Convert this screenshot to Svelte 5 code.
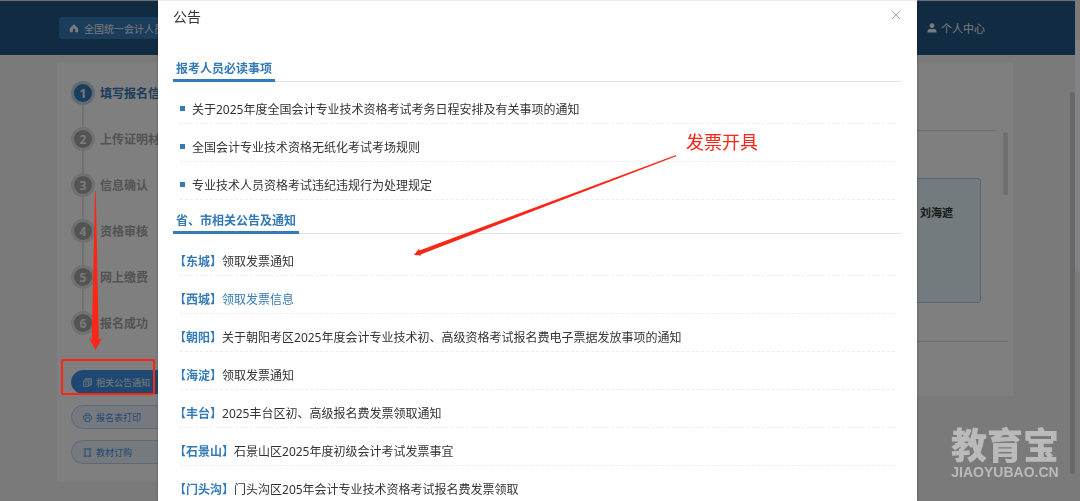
<script>
  const steps = ['填写报名信息', '上传证明材料', '信息确认', '资格审核', '网上缴费', '报名成功'];
  const required = [
    '关于2025年度全国会计专业技术资格考试考务日程安排及有关事项的通知',
    '全国会计专业技术资格无纸化考试考场规则',
    '专业技术人员资格考试违纪违规行为处理规定'
  ];
  const local = [
    { area: '东城', title: '领取发票通知' },
    { area: '西城', title: '领取发票信息', active: true },
    { area: '朝阳', title: '关于朝阳考区2025年度会计专业技术初、高级资格考试报名费电子票据发放事项的通知' },
    { area: '海淀', title: '领取发票通知' },
    { area: '丰台', title: '2025丰台区初、高级报名费发票领取通知' },
    { area: '石景山', title: '石景山区2025年度初级会计考试发票事宜' },
    { area: '门头沟', title: '门头沟区205年会计专业技术资格考试报名费发票领取' }
  ];
</script>

<div class="page">
  <header class="topbar">
    <a class="home" href="#home">
      <svg width="10" height="10" viewBox="0 0 10 10"><path d="M5 1.200 9.200 5.200v4H6.200V7a1.200 1.200 0 0 0-2.400 0v2.200H.8v-4z" fill="currentColor" /></svg>
      全国统一会计人员管理
    </a>
    <a class="user" href="#user">
      <svg width="10" height="10" viewBox="0 0 10 10"><circle cx="5" cy="2.7" r="2.4" fill="currentColor" /><path d="M.6 9.6V8.2C.6 6.8 1.6 6 2.8 6h4.4c1.2 0 2.2.8 2.2 2.2v1.4z" fill="currentColor" /></svg>
      个人中心
    </a>
  </header>

  <main class="content">
    <aside class="side">
      <ol class="steps">
        {#each steps as step, i}
          <li class:current={i === 0}><span class="dot">{i + 1}</span>{step}</li>
        {/each}
      </ol>
      <div class="actions">
        <button class="primary" type="button">
          <svg width="9" height="9" viewBox="0 0 10 10" fill="none" stroke="currentColor" stroke-width=".8"><path d="M3 2V.6h6.400v6.800H8M1.800 3.400V2H8v6.400H6.200M.6 3.400h5.600v6H.6zM2 5.400h2.800M2 7.400h2.800" /></svg>
          相关公告通知
        </button>
        <button type="button">
          <svg width="9" height="9" viewBox="0 0 10 10" fill="none" stroke="currentColor" stroke-width=".8"><path d="M2.600 3V.8h4.800V3M2.400 7.400H1.600a1 1 0 0 1-1-1V4a1 1 0 0 1 1-1h6.800a1 1 0 0 1 1 1v2.400a1 1 0 0 1-1 1h-.8M2.600 5.400h4.800v4H2.600z" /></svg>
          报名表打印
        </button>
        <button type="button">
          <svg width="9" height="9" viewBox="0 0 10 10" fill="none" stroke="currentColor"><path d="M2.200 1v8M7.800 1v8M.6 1h8.800M.6 9h8.800" /></svg>
          教材订购
        </button>
      </div>
    </aside>

    <section class="detail">
      <div class="detail-head"></div>
      <div class="detail-body">
        <div class="card">刘海遮</div>
        <div class="track"></div>
      </div>
      <div class="detail-foot"></div>
    </section>
  </main>
  <div class="page-track"></div>
</div>

<div class="overlay">
  <div class="dialog" role="dialog" aria-modal="true" aria-labelledby="dialog-title">
    <div class="dialog-head">
      <h1 id="dialog-title">公告</h1>
      <button class="close" type="button" aria-label="关闭">
        <svg width="10" height="10" viewBox="0 0 10 10"><path d="M1 1l8 8M9 1L1 9" stroke="currentColor" fill="none" /></svg>
      </button>
    </div>
    <h2><span>报考人员必读事项</span></h2>
    <ul class="notices">
      {#each required as title}
        <li class="bullet"><a href="#notice">{title}</a></li>
      {/each}
    </ul>
    <h2><span>省、市相关公告及通知</span></h2>
    <ul class="notices">
      {#each local as item}
        <li class="tagged"><b>【{item.area}】</b><a href="#notice" class:active={item.active}>{item.title}</a></li>
      {/each}
    </ul>
  </div>
  <div class="window-track"><div class="thumb"></div></div>
</div>

<svg class="marks" width="1080" height="501" viewBox="0 0 1080 501">
  <rect x="62" y="360" width="92" height="34" rx="1" fill="none" stroke="#fb2616" stroke-width="2" />
  <path d="M95 191h.8L98.8 339.500l3.200-1.500-6.500 12L89 338l2.800 1.500z" fill="#fb2616" />
  <path d="M676 155v1.200L420.500 254.400l1 1.200-7.500-.6 5.200-6.600.2 2.200z" fill="#fb2616" />
</svg>
<span class="callout">发票开具</span>
<div class="brand"><strong>教育宝</strong><span>JIAOYUBAO.CN</span></div>

<style>
  :global(body) {
    margin: 0;
    overflow: hidden;
    background: #f5f5f5;
    font-family: "Noto Sans", "Noto Sans CJK SC", sans-serif;
    font-size: 12px;
    color: #333;
  }
  a { color: inherit; text-decoration: none; }
  ol, ul, h1, h2 { margin: 0; padding: 0; list-style: none; }
  button { font: inherit; cursor: pointer; }
  svg { flex: none; }

  .page {
    position: relative;
    box-sizing: border-box;
    min-height: 100vh;
    margin-right: 5px;
    border-top: 1px solid #dde2e4;
  }
  .topbar {
    display: flex;
    align-items: center;
    justify-content: space-between;
    box-sizing: border-box;
    height: 54px;
    padding: 0 90px 0 59px;
    background: #225884;
    color: #f4f4f4;
  }
  .home, .user { display: flex; align-items: center; }
  .home {
    gap: 5px;
    width: 160px;
    height: 22px;
    box-sizing: border-box;
    padding-left: 10px;
    border-radius: 3px;
    background: #337ab7;
    font-size: 10px;
  }
  .user { gap: 4px; font-size: 11px; }

  .content {
    display: flex;
    align-items: flex-start;
    padding: 7px 62px 0 57px;
  }
  .side { width: 200px; box-sizing: border-box; padding: 19px 14px 18px; background: #fff; }
  .steps li {
    position: relative;
    display: flex;
    align-items: center;
    gap: 5px;
    height: 24px;
    margin-bottom: 22px;
    color: #a6a6a6;
    font-weight: 700;
    white-space: nowrap;
  }
  .steps li:not(:last-child)::after {
    content: "";
    position: absolute;
    top: 24px;
    left: 11px;
    width: 2px;
    height: 22px;
    background: #e2e2e2;
  }
  .dot {
    display: grid;
    place-items: center;
    box-sizing: border-box;
    width: 24px;
    height: 24px;
    border: 3px solid #e2e2e2;
    border-radius: 50%;
    background: #a6a6a6;
    color: #f4f4f4;
  }
  .steps .current { color: #337ab7; }
  .current .dot { border-color: #c1d7e9; background: #337ab7; }
  .steps .current::after { background: #a9cbe6; }

  .actions { display: flex; flex-direction: column; gap: 11px; padding-top: 13px; }
  .actions button {
    display: flex;
    align-items: center;
    gap: 4px;
    height: 24px;
    padding: 0 11px;
    border: 1px solid #b8d4f0;
    border-radius: 12px;
    background: #ecf5ff;
    color: #3d90e4;
    font-size: 9px;
  }
  .actions .primary { border-color: #3d90e4; background: #3d90e4; color: #f4f4f4; }

  .detail { flex: 1; background: #fff; padding: 0 5px 54px 0; }
  .detail-head { height: 68px; margin-right: 12px; border-bottom: 1px solid #dcdcdc; }
  .detail-body {
    display: flex;
    justify-content: space-between;
    align-items: flex-start;
    height: 210px;
    border-bottom: 1px solid #dcdcdc;
  }
  .card {
    flex: 1;
    box-sizing: border-box;
    height: 125px;
    margin: 47px 22px 0 0;
    padding: 26px 27px;
    border: 1px solid #a0d0f5;
    border-radius: 3px;
    background: #e6f7ff;
    font-size: 11px;
    font-weight: 700;
    line-height: 16px;
    text-align: right;
  }
  .track { width: 5px; height: 63px; margin-top: 1px; border-radius: 3px; background: #dddee0; }
  .page-track {
    position: absolute;
    top: 91px;
    right: 0;
    width: 5px;
    height: 382px;
    border-radius: 3px;
    background: #d0d0d0;
  }

  .overlay {
    position: fixed;
    inset: 0;
    padding: 0 163px 0 158px;
    background: rgba(0, 0, 0, 0.5);
  }
  .dialog {
    box-sizing: border-box;
    height: 100vh;
    overflow: hidden;
    padding: 0 15px;
    border-top: 1px solid #ececec;
    background: #fff;
    box-shadow: 0 1px 3px rgba(0, 0, 0, 0.3);
  }
  .dialog-head {
    display: flex;
    justify-content: space-between;
    align-items: flex-start;
    height: 47px;
  }
  h1 { padding-top: 6px; font-size: 14px; font-weight: 400; line-height: 20px; }
  .close { display: flex; margin: 9px 0 0; padding: 0 1px 0 0; border: 0; background: none; color: #a4a6aa; }
  h2 {
    display: flex;
    align-items: flex-end;
    height: 33px;
    border-bottom: 1px solid #e4e4e4;
    color: #337ab7;
    font-size: 12px;
    line-height: 20px;
  }
  h2 span { margin-bottom: -1px; padding: 0 3px; border-bottom: 3px solid #337ab7; }
  .notices { padding: 4px 7px 0; }
  .notices li {
    display: flex;
    align-items: flex-end;
    box-sizing: border-box;
    height: 38px;
    padding-bottom: 3px;
    border-bottom: 1px dashed #eee;
    line-height: 20px;
    white-space: nowrap;
  }
  .bullet { gap: 7px; }
  .bullet::before { content: ""; width: 5px; height: 5px; margin-bottom: 9px; background: #337ab7; }
  .tagged b { margin-left: -6px; color: #337ab7; }
  .active { color: #337ab7; }

  .window-track {
    position: absolute;
    top: 0;
    right: 0;
    width: 5px;
    height: 100%;
    box-sizing: border-box;
    padding-top: 40px;
  }
  .thumb { height: 232px; border-radius: 2px; background: #828285; }

  .marks { position: absolute; top: 0; left: 0; pointer-events: none; }
  .callout { position: absolute; top: 130px; left: 686px; color: #fb2616; font-size: 18px; line-height: 24px; }
  .brand {
    position: fixed;
    right: 21px;
    bottom: 21px;
    display: flex;
    flex-direction: column;
    align-items: center;
    color: #bababa;
  }
  .brand strong { font-size: 36px; font-weight: 900; line-height: 36px; }
  .brand span { font: 700 14px/16px "Liberation Sans", sans-serif; }
</style>
